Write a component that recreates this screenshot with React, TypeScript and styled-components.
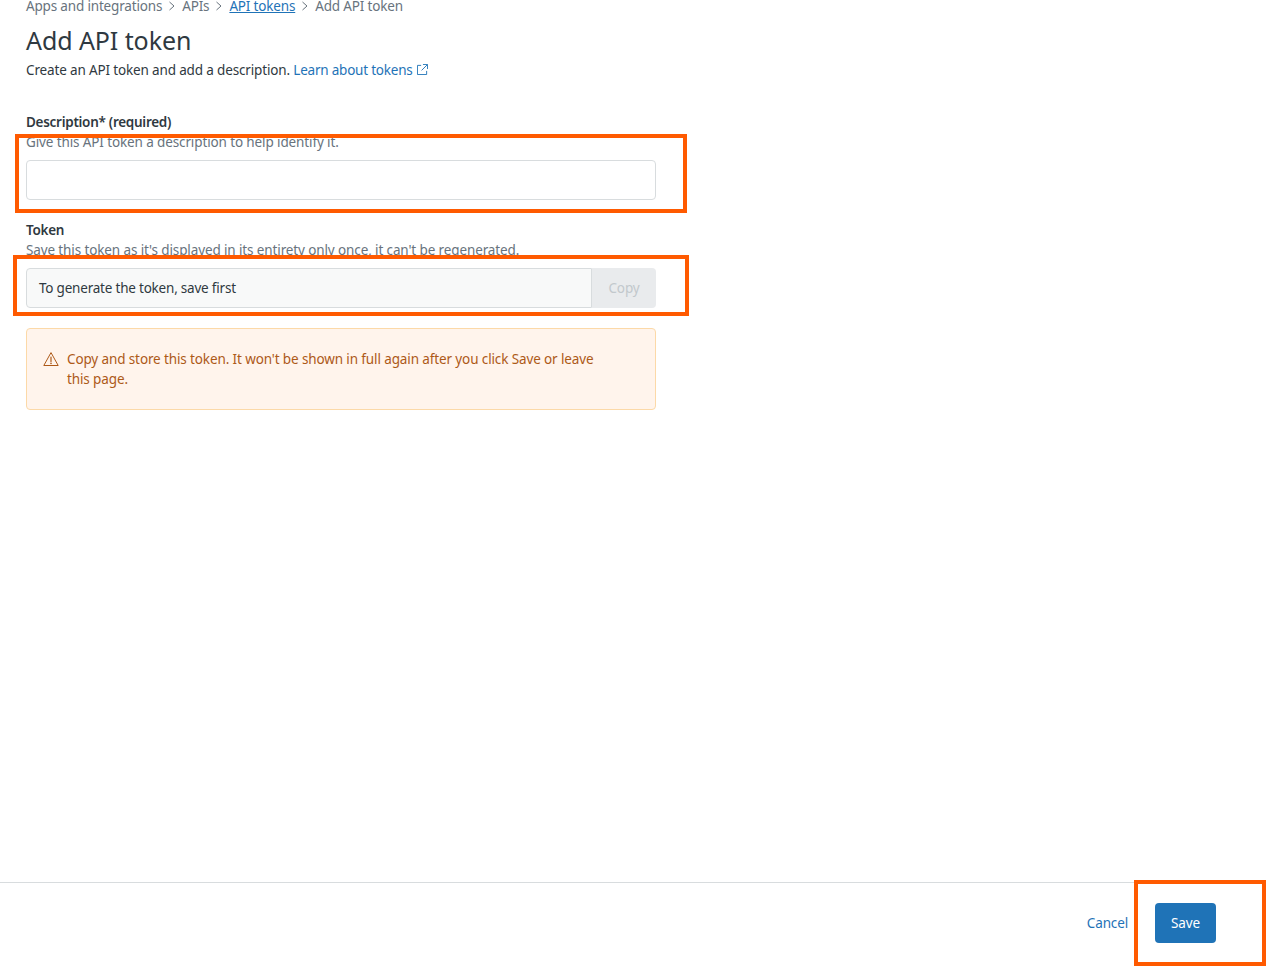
import styled, { createGlobalStyle } from "styled-components";

const GlobalStyle = createGlobalStyle`
	html, body {
		margin: 0;
		padding: 0;
		height: 100%;
		background: #fff;
	}
	body {
		font-family: "Noto Sans", "Open Sans", "Liberation Sans", sans-serif;
		overflow: hidden;
	}
	* {
		box-sizing: border-box;
	}
`;

export default function App() {
	return (
		<Page>
			<GlobalStyle />
			<Main>
				<Breadcrumbs>
					<Crumb>Apps and integrations</Crumb>
					<Chevron />
					<Crumb>APIs</Crumb>
					<Chevron />
					<CrumbLink href="#">API tokens</CrumbLink>
					<Chevron />
					<Crumb>Add API token</Crumb>
				</Breadcrumbs>
				<Title>Add API token</Title>
				<Intro>
					Create an API token and add a description.{" "}
					<LearnLink href="#">
						Learn about tokens
						<ExternalIcon />
					</LearnLink>
				</Intro>

				<Form>
					<Field>
						<Label>Description* (required)</Label>
						<Help>Give this API token a description to help identify it.</Help>
						<TextInput />
					</Field>
					<Field>
						<Label>Token</Label>
						<Help>
							Save this token as it's displayed in its entirety only once, it
							can't be regenerated.
						</Help>
						<TokenRow>
							<TokenValue>To generate the token, save first</TokenValue>
							<CopyButton disabled>Copy</CopyButton>
						</TokenRow>
					</Field>
					<Alert>
						<WarningIcon />
						<AlertText>
							Copy and store this token. It won't be shown in full again after
							you click Save or leave this page.
						</AlertText>
					</Alert>
				</Form>
			</Main>

			<Footer>
				<CancelLink href="#">Cancel</CancelLink>
				<SaveButton>Save</SaveButton>
			</Footer>

			<Highlight $left={15} $top={134} $width={672} $height={79} />
			<Highlight $left={13} $top={255} $width={676} $height={61} />
			<Highlight $left={1134} $top={880} $width={132} $height={86} />
		</Page>
	);
}

function Chevron() {
	return (
		<ChevronSvg viewBox="0 0 8 10" width="8" height="10" aria-hidden="true">
			<path d="M1.5 1 L6 5 L1.5 9" fill="none" stroke="#68737d" strokeWidth="1" />
		</ChevronSvg>
	);
}

function ExternalIcon() {
	return (
		<ExternalSvg viewBox="0 0 12 12" width="11" height="11" aria-hidden="true">
			<path
				d="M4.5 1.5 H0.5 V11.5 H10.5 V7.5 M6.5 0.5 H11.5 V5.5 M11.2 0.8 L5 7"
				fill="none"
				stroke="currentColor"
				strokeWidth="1"
			/>
		</ExternalSvg>
	);
}

function WarningIcon() {
	return (
		<WarningSvg viewBox="0 0 16 16" width="16" height="16" aria-hidden="true">
			<path
				d="M8 1.6 L15.2 14.5 H0.8 Z"
				fill="none"
				stroke="#ad5918"
				strokeWidth="1"
				strokeLinejoin="round"
			/>
			<path d="M8 6 V10.5" stroke="#ad5918" strokeWidth="1.2" strokeLinecap="round" />
			<circle cx="8" cy="12.4" r="0.8" fill="#ad5918" />
		</WarningSvg>
	);
}

const Page = styled.div`
	position: relative;
	height: 967px;
	display: flex;
	flex-direction: column;
	overflow: hidden;
	color: #2f3941;
	font-size: 13.5px;
	letter-spacing: -0.15px;
	line-height: 20px;
`;

const Main = styled.main`
	flex: 1;
	padding: 0 0 0 26px;
	box-sizing: content-box;
	width: 630px;
`;

const Breadcrumbs = styled.nav`
	display: flex;
	align-items: center;
	gap: 6px;
	margin-top: -4px;
	height: 20px;
	letter-spacing: -0.17px;
`;

const Crumb = styled.span`
	color: #68737d;
`;

const CrumbLink = styled.a`
	color: #1f73b7;
	text-decoration: underline;
`;

const ChevronSvg = styled.svg`
	flex: none;
`;

const Title = styled.h1`
	margin: 8px 0 0;
	font-size: 25px;
	letter-spacing: -0.08px;
	line-height: 32px;
	font-weight: 400;
	color: #2f3941;
`;

const Intro = styled.p`
	margin: 4px 0 0;
	color: #2f3941;
`;

const LearnLink = styled.a`
	color: #1f73b7;
	text-decoration: none;
	letter-spacing: -0.22px;
`;

const ExternalSvg = styled.svg`
	margin-left: 4px;
	vertical-align: 0;
`;

const Form = styled.div`
	margin-top: 32px;
	display: flex;
	flex-direction: column;
`;

const Field = styled.div`
	margin-bottom: 20px;
`;

const Label = styled.div`
	font-weight: 600;
	letter-spacing: -0.28px;
	color: #2f3941;
`;

const Help = styled.div`
	color: #68737d;
	margin-bottom: 8px;
	height: 20px;
	line-height: 20px;
	letter-spacing: -0.12px;
`;

const TextInput = styled.input`
	display: block;
	width: 100%;
	height: 40px;
	background: #fff;
	border: 1px solid #d8dcde;
	border-radius: 4px;
	outline: none;
`;

const TokenRow = styled.div`
	display: flex;
	height: 40px;
`;

const TokenValue = styled.div`
	flex: 1;
	display: flex;
	align-items: center;
	padding: 0 12px;
	background: #f8f9f9;
	border: 1px solid #d8dcde;
	border-radius: 4px 0 0 4px;
	color: #2f3941;
	letter-spacing: -0.21px;
`;

const CopyButton = styled.button`
	width: 64px;
	border: none;
	border-radius: 0 4px 4px 0;
	background: #e9ebed;
	color: #c2c8cc;
	font: inherit;
	letter-spacing: inherit;
	padding: 0;
`;

const Alert = styled.div`
	display: flex;
	align-items: flex-start;
	gap: 8px;
	height: 82px;
	padding: 20px 16px;
	background: #fff4ec;
	border: 1px solid #fcd9a8;
	border-radius: 4px;
	color: #ad5918;
	letter-spacing: -0.12px;
`;

const WarningSvg = styled.svg`
	flex: none;
	margin-top: 2px;
`;

const AlertText = styled.div`
	max-width: 540px;
`;

const Footer = styled.footer`
	flex: none;
	height: 85px;
	display: flex;
	align-items: center;
	justify-content: flex-end;
	gap: 27px;
	padding: 0 50px 4px 0;
	border-top: 1px solid #d8dcde;
`;

const CancelLink = styled.a`
	color: #1f73b7;
	text-decoration: none;
`;

const SaveButton = styled.button`
	width: 61px;
	height: 40px;
	border: none;
	border-radius: 4px;
	background: #1f73b7;
	color: #fff;
	font: inherit;
	letter-spacing: inherit;
	padding: 0;
`;

// annotation frames drawn over the screenshot
const Highlight = styled.div<{
	$left: number;
	$top: number;
	$width: number;
	$height: number;
}>`
	position: absolute;
	left: ${({ $left }) => $left}px;
	top: ${({ $top }) => $top}px;
	width: ${({ $width }) => $width}px;
	height: ${({ $height }) => $height}px;
	border: 4px solid #ff5a00;
	pointer-events: none;
`;
